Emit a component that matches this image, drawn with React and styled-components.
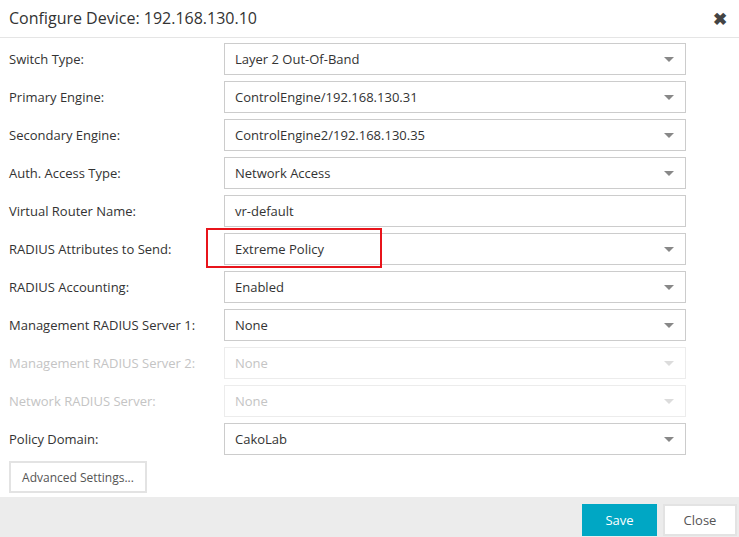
import React from 'react';
import styled, {createGlobalStyle} from "styled-components";

const Global = createGlobalStyle`
  body {
    margin: 0;
    background: #fff;
    font-family: "Open Sans", "Liberation Sans", sans-serif;
    color: #333;
  }
`

const Dialog = styled.div`
  width: 739px;
  height: 537px;
  display: flex;
  flex-direction: column;
  background: #fff;
`

const Header = styled.div`
  height: 38px;
  box-sizing: border-box;
  border-bottom: 1px solid #e5e5e5;
  display: flex;
  align-items: center;
  justify-content: space-between;
  padding: 0 12px 1px 9px;
`

const Title = styled.h1`
  margin: 0;
  font-size: 16px;
  font-weight: 400;
  color: #333;
`

const CloseX = styled.span`
  font-size: 17px;
  font-weight: 700;
  color: #444;
  line-height: 1;
`

const Body = styled.div`
  flex: 1;
  padding: 5px 0 0 9px;
`

const Row = styled.div`
  display: grid;
  grid-template-columns: 215px 462px;
  align-items: center;
  margin-bottom: 6px;
  position: relative;
`

const Label = styled.label`
  font-size: 13px;
  color: ${({disabled}) => disabled ? "#c4c4c4" : "#333"};
`

const Field = styled.div`
  height: 32px;
  box-sizing: border-box;
  border: 1px solid ${({disabled}) => disabled ? "#ececec" : "#cccccc"};
  display: flex;
  align-items: center;
  justify-content: space-between;
  padding: 0 11px 0 10px;
  font-size: 13px;
  color: ${({disabled}) => disabled ? "#c4c4c4" : "#333"};
`

const Arrow = styled.span`
  width: 0;
  height: 0;
  border-left: 5px solid transparent;
  border-right: 5px solid transparent;
  border-top: 5px solid ${({disabled}) => disabled ? "#dcdcdc" : "#888"};
  margin-top: 1px;
`

const Highlight = styled.div`
  position: absolute;
  left: 197px;
  top: -5px;
  width: 176px;
  height: 40px;
  box-sizing: border-box;
  border: 2px solid #e8141b;
  pointer-events: none;
`

const AdvButton = styled.button`
  height: 32px;
  width: 138px;
  box-sizing: border-box;
  background: #fff;
  border: 2px solid #e3e3e3;
  font-family: inherit;
  font-size: 12px;
  color: #555;
  padding: 0;
`

const Footer = styled.div`
  height: 40px;
  background: #ececec;
  display: flex;
  justify-content: flex-end;
  align-items: flex-start;
  gap: 6px;
  padding: 7px 2px 0 0;
  box-sizing: border-box;
`

const FooterButton = styled.button`
  height: 32px;
  width: ${({primary}) => primary ? "75px" : "74px"};
  box-sizing: border-box;
  font-family: inherit;
  font-size: 13px;
  border: ${({primary}) => primary ? "none" : "2px solid #e3e3e3"};
  background: ${({primary}) => primary ? "#00a7c4" : "#fff"};
  color: ${({primary}) => primary ? "#fff" : "#555"};
  padding: 0;
`

const rows = [
    {label: "Switch Type:", value: "Layer 2 Out-Of-Band", select: true},
    {label: "Primary Engine:", value: "ControlEngine/192.168.130.31", select: true},
    {label: "Secondary Engine:", value: "ControlEngine2/192.168.130.35", select: true},
    {label: "Auth. Access Type:", value: "Network Access", select: true},
    {label: "Virtual Router Name:", value: "vr-default", select: false},
    {label: "RADIUS Attributes to Send:", value: "Extreme Policy", select: true, highlight: true},
    {label: "RADIUS Accounting:", value: "Enabled", select: true},
    {label: "Management RADIUS Server 1:", value: "None", select: true},
    {label: "Management RADIUS Server 2:", value: "None", select: true, disabled: true},
    {label: "Network RADIUS Server:", value: "None", select: true, disabled: true},
    {label: "Policy Domain:", value: "CakoLab", select: true},
]

const App = () => {
    return (
        <Dialog>
            <Global/>
            <Header>
                <Title>Configure Device: 192.168.130.10</Title>
                <CloseX>✖</CloseX>
            </Header>
            <Body>
                {rows.map((row, index) => (
                    <Row key={index}>
                        <Label disabled={row.disabled}>{row.label}</Label>
                        <Field disabled={row.disabled}>
                            <span>{row.value}</span>
                            {row.select && <Arrow disabled={row.disabled}/>}
                        </Field>
                        {row.highlight && <Highlight/>}
                    </Row>
                ))}
                <AdvButton>Advanced Settings...</AdvButton>
            </Body>
            <Footer>
                <FooterButton primary>Save</FooterButton>
                <FooterButton>Close</FooterButton>
            </Footer>
        </Dialog>
    );
};

export default App;
